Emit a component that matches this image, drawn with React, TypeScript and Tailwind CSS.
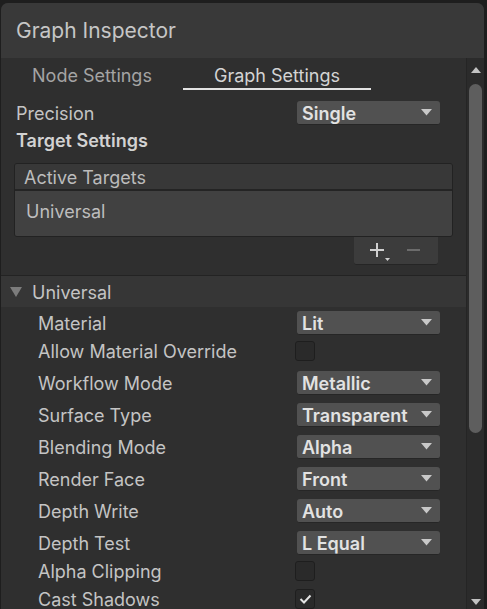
import React from "react";

type Row =
    | {kind: "drop"; label: string; value: string}
    | {kind: "check"; label: string; checked: boolean};

const rows: Row[] = [
    {kind: "drop", label: "Material", value: "Lit"},
    {kind: "check", label: "Allow Material Override", checked: false},
    {kind: "drop", label: "Workflow Mode", value: "Metallic"},
    {kind: "drop", label: "Surface Type", value: "Transparent"},
    {kind: "drop", label: "Blending Mode", value: "Alpha"},
    {kind: "drop", label: "Render Face", value: "Front"},
    {kind: "drop", label: "Depth Write", value: "Auto"},
    {kind: "drop", label: "Depth Test", value: "L Equal"},
    {kind: "check", label: "Alpha Clipping", checked: false},
    {kind: "check", label: "Cast Shadows", checked: true},
];

const Caret: React.FC = () => (
    <svg width="11" height="7" viewBox="0 0 11 7" className="shrink-0">
        <path d="M0 0 H11 L5.5 6.5 Z" fill="#c8c8c8" />
    </svg>
);

const Dropdown: React.FC<{value: string}> = ({value}) => (
    <div className="w-[143px] h-[24px] bg-[#515151] rounded-[3px] border-b border-[#262626] flex items-center justify-between pl-[5px] pr-[8px]">
        <span className="text-[18px] font-semibold text-[#e2e2e2] leading-none whitespace-nowrap pt-[2px]">{value}</span>
        <Caret />
    </div>
);

const Checkbox: React.FC<{checked: boolean}> = ({checked}) => (
    <div className="w-[20px] h-[20px] rounded-[3px] bg-[#2a2a2a] border border-[#1e1e1e] flex items-center justify-center">
        {checked && (
            <svg width="13" height="10" viewBox="0 0 13 10">
                <path d="M1.5 5 L5 8.5 L11.5 1.5" stroke="#e4e4e4" strokeWidth="2" fill="none" />
            </svg>
        )}
    </div>
);

const App: React.FC = () => {
    return (
        <div
            className="w-[487px] h-[609px] bg-[#1e1e1e] pt-[3px] pl-[1px] pr-[3px] overflow-hidden"
            style={{fontFamily: "Inter, 'Noto Sans', sans-serif"}}
        >
            <div className="h-full rounded-t-[7px] bg-[#2f2f2f] flex flex-col overflow-hidden">
                {/* Title bar */}
                <div className="h-[55px] shrink-0 bg-[#393939] flex items-center px-[15px]">
                    <span className="text-[21px] text-[#c6c6c6] leading-none">Graph Inspector</span>
                </div>

                <div className="flex flex-1 min-h-0">
                    {/* Content */}
                    <div className="flex-1 min-w-0">
                        {/* Tabs */}
                        <div className="flex h-[32px]">
                            <div className="w-[182px] flex flex-col justify-end items-center">
                                <span className="text-[18px] leading-[20px] text-[#a4a4a4] mb-[4px]">Node Settings</span>
                            </div>
                            <div className="w-[188px] flex flex-col justify-end items-center">
                                <span className="text-[18px] leading-[20px] text-[#d4d4d4] mb-[2px]">Graph Settings</span>
                                <div className="h-[2px] w-full bg-[#e2e2e2]" />
                            </div>
                        </div>

                        {/* Precision */}
                        <div className="mt-[7px] h-[32px] flex items-center justify-between pl-[15px] pr-[26px]">
                            <span className="text-[18px] leading-none text-[#c4c4c4] pt-[2px]">Precision</span>
                            <Dropdown value="Single" />
                        </div>
                        <div className="h-[22px] flex items-center pl-[15px]">
                            <span className="text-[18px] leading-none font-semibold text-[#d2d2d2] pt-[2px]">Target Settings</span>
                        </div>

                        {/* Active Targets list */}
                        <div className="mt-[12px] ml-[13px] w-[439px]">
                            <div className="border border-[#222222] rounded-[3px] overflow-hidden">
                                <div className="h-[27px] bg-[#383838] border-b-2 border-[#242424] flex items-center pl-[9px]">
                                    <span className="text-[18px] leading-none text-[#bcbcbc] pt-[2px]">Active Targets</span>
                                </div>
                                <div className="h-[45px] bg-[#414141] pl-[11px] pt-[8px]">
                                    <span className="text-[18px] text-[#bdbdbd] leading-[26px]">Universal</span>
                                </div>
                            </div>
                            <div className="flex justify-end pr-[15px]">
                                <div className="w-[84px] h-[28px] bg-[#3c3c3c] rounded-b-[3px] border-b border-[#252525] flex items-center justify-center gap-[22px] pb-[1px] pr-[4px]">
                                    <div className="relative">
                                        <svg width="16" height="16" viewBox="0 0 16 16">
                                            <path d="M8 1 V15 M1 8 H15" stroke="#d0d0d0" strokeWidth="2" />
                                        </svg>
                                        <svg width="5" height="3" viewBox="0 0 5 3" className="absolute -right-[5px] bottom-[-3px]">
                                            <path d="M0 0 H5 L2.5 3 Z" fill="#d0d0d0" />
                                        </svg>
                                    </div>
                                    <svg width="13" height="2" viewBox="0 0 13 2">
                                        <path d="M0 1 H13" stroke="#6c6c6c" strokeWidth="2" />
                                    </svg>
                                </div>
                            </div>
                        </div>

                        {/* Universal foldout */}
                        <div className="mt-[10px] border-t border-[#232323]">
                            <div className="h-[31px] bg-[#363636] flex items-center pl-[9px] gap-[10px]">
                                <svg width="12" height="10" viewBox="0 0 12 10">
                                    <path d="M0 0 H12 L6 10 Z" fill="#7c7c7c" />
                                </svg>
                                <span className="text-[18px] leading-none text-[#c4c4c4] pt-[2px]">Universal</span>
                            </div>
                            {rows.map((row) =>
                                row.kind === "drop" ? (
                                    <div key={row.label} className="h-[32px] flex items-center pl-[37px]">
                                        <span className="w-[259px] text-[18px] leading-none text-[#c4c4c4] whitespace-nowrap pt-[2px]">{row.label}</span>
                                        <Dropdown value={row.value} />
                                    </div>
                                ) : (
                                    <div key={row.label} className="h-[28px] pb-[4px] flex items-center pl-[37px]">
                                        <span className="w-[257px] text-[18px] leading-none text-[#c4c4c4] whitespace-nowrap pt-[2px]">{row.label}</span>
                                        <Checkbox checked={row.checked} />
                                    </div>
                                )
                            )}
                        </div>
                    </div>

                    {/* Scrollbar */}
                    <div className="w-[18px] shrink-0 bg-[#2b2b2b] border-l border-[#252525] flex flex-col items-center">
                        <svg width="10" height="6" viewBox="0 0 10 6" className="mt-[9px]">
                            <path d="M0 6 H10 L5 0 Z" fill="#c2c2c2" />
                        </svg>
                        <div className="mt-[11px] w-[13px] h-[349px] rounded-full bg-[#5e5e5e]" />
                        <div className="flex-1" />
                        <svg width="10" height="6" viewBox="0 0 10 6" className="mb-[4px]">
                            <path d="M0 0 H10 L5 6 Z" fill="#c2c2c2" />
                        </svg>
                    </div>
                </div>
            </div>
        </div>
    );
};

export default App;
